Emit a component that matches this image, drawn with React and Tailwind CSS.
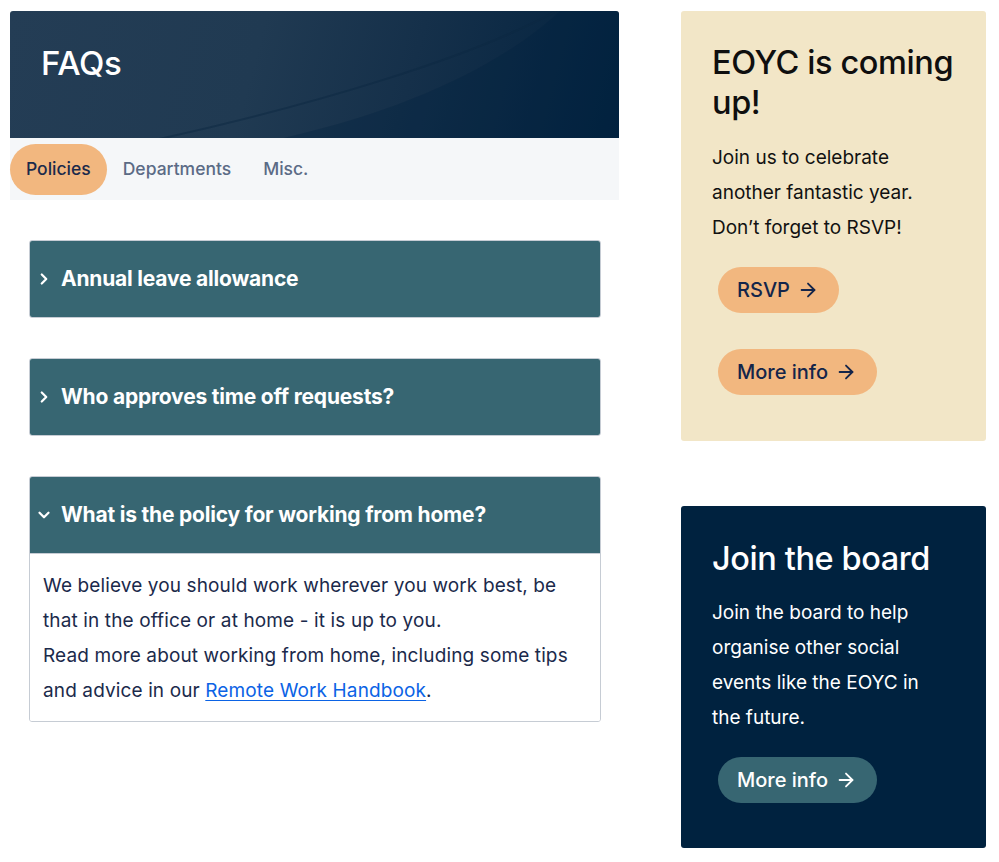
import React from "react";
import { ChevronRight, ChevronDown, ArrowRight } from "lucide-react";

const sans = "font-['Inter','Noto_Sans',sans-serif]";

function AccItem({ title, open, children }) {
  return (
    <div className="rounded-[3px] border border-[#c6ccd4] overflow-hidden">
      <div className="h-[76px] bg-[#376672] flex items-center pl-[5px] text-white">
        {open ? (
          <ChevronDown size={18} strokeWidth={3} className="mr-[8px]" />
        ) : (
          <ChevronRight size={18} strokeWidth={3} className="mr-[8px]" />
        )}
        <span className="text-[21px] font-bold tracking-[-0.2px]">{title}</span>
      </div>
      {open && (
        <div className="bg-white px-[13px] pt-[14px] pb-[13px] text-[19px] leading-[35px] tracking-[0.12px] text-[#1b2a4b] border-t border-[#c6ccd4]">
          {children}
        </div>
      )}
    </div>
  );
}

function Btn({ children, variant }) {
  const cls =
    variant === "teal"
      ? "bg-[#376672] text-white"
      : "bg-[#f2b77f] text-[#14254a]";
  return (
    <button
      className={`${cls} h-[46px] rounded-full pl-[19px] pr-[20px] inline-flex items-center gap-[7px] text-[20px] font-medium ml-[6px]`}
    >
      {children}
      <ArrowRight size={22} strokeWidth={2} />
    </button>
  );
}

export default function App() {
  return (
    <div className={`${sans} bg-white w-[999px] min-h-[862px] flex gap-[62px] pl-[10px] pt-[11px] pr-[13px]`}>
      <div className="w-[609px] shrink-0">
        <div className="relative h-[127px] rounded-t-[3px] overflow-hidden bg-[linear-gradient(105deg,#243d55_0%,#203a52_40%,#15304a_65%,#02223f_100%)]">
          <svg className="absolute inset-0" width="609" height="127" viewBox="0 0 609 127">
            <path d="M140 130 C 300 95, 470 45, 555 -5" fill="none" stroke="#0c2842" strokeWidth="2" opacity="0.5" />
            <path d="M555 -5 C 500 50, 400 100, 260 130 L 609 130 L 609 -5 Z" fill="#01223f" opacity="0.3" />
          </svg>
          <h1 className="relative pl-[31px] pt-[32px] text-[33px] leading-[40px] font-medium text-white tracking-[-0.3px]">
            FAQs
          </h1>
        </div>
        <div className="h-[62px] bg-[#f5f7f9] flex items-start pt-[6px]">
          <div className="h-[51px] px-[16px] rounded-full bg-[#f2b77f] flex items-center text-[17.5px] font-medium text-[#1b2a4b]">
            Policies
          </div>
          <div className="h-[51px] px-[16px] flex items-center text-[17.5px] font-medium text-[#5b6b86]">
            Departments
          </div>
          <div className="h-[51px] px-[16px] flex items-center text-[17.5px] font-medium text-[#5b6b86]">
            Misc.
          </div>
        </div>
        <div className="pt-[40px] pl-[19px] pr-[18px] flex flex-col gap-[40px]">
          <AccItem title="Annual leave allowance" />
          <AccItem title="Who approves time off requests?" />
          <AccItem title="What is the policy for working from home?" open>
            <p>
              We believe you should work wherever you work best, be that in the office or at home - it is up to you.
            </p>
            <p>
              Read more about working from home, including some tips and advice in our{" "}
              <a href="#" className="text-[#0b63e5] underline underline-offset-[3px]">
                Remote Work Handbook
              </a>
              .
            </p>
          </AccItem>
        </div>
      </div>
      <div className="w-[305px] shrink-0 flex flex-col gap-[65px]">
        <div className="rounded-[3px] bg-[#f2e6c7] pl-[31px] pr-[34px] pt-[32px] pb-[46px]">
          <h2 className="mr-[-20px] text-[32.5px] leading-[40px] font-medium text-[#0f0f0f] tracking-[-0.4px]">
            EOYC is coming
            <br />
            up!
          </h2>
          <p className="mt-[17px] text-[19px] leading-[35px] text-[#111]">
            Join us to celebrate another fantastic year. Don’t forget to RSVP!
          </p>
          <div className="mt-[22px] flex flex-col items-start gap-[36px]">
            <Btn>RSVP</Btn>
            <Btn>More info</Btn>
          </div>
        </div>
        <div className="rounded-[3px] bg-[#00223f] pl-[31px] pr-[34px] pt-[33px] pb-[45px]">
          <h2 className="mr-[-20px] text-[32.5px] leading-[40px] font-medium text-white tracking-[-0.4px]">
            Join the board
          </h2>
          <p className="mt-[16px] text-[19px] leading-[35px] text-white">
            Join the board to help organise other social events like the EOYC in the future.
          </p>
          <div className="mt-[22px]">
            <Btn variant="teal">More info</Btn>
          </div>
        </div>
      </div>
    </div>
  );
}
